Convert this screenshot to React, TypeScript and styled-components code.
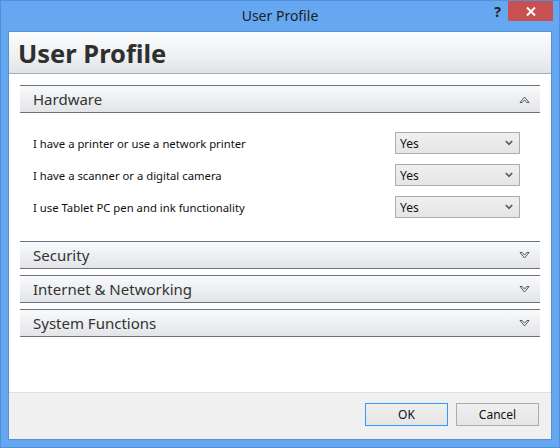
import React from "react"
import styled, { createGlobalStyle } from "styled-components"

const GlobalStyle = createGlobalStyle`
  html, body {
    margin: 0;
    padding: 0;
    width: 560px;
    height: 448px;
    overflow: hidden;
    background: #ffffff;
  }
  * { box-sizing: border-box; }
`

const uiFont = `"Noto Sans", "Open Sans", "DejaVu Sans", sans-serif`

interface SectionProps {
  title: string
  open?: boolean
  children?: React.ReactNode
}

// hollow chevron, as in the accordion headers
const Chevron: React.FunctionComponent<{ up?: boolean }> = ({ up = false }) => (
  <svg width="11" height="9" viewBox="0 0 11 9" style={up ? undefined : { transform: "scaleY(-1)" }}>
    <path
      d="M1 7.5 L5.5 2 L10 7.5 L7.8 7.5 L5.5 4.8 L3.2 7.5 Z"
      fill="#ffffff"
      stroke="#50565e"
      strokeWidth="1"
      strokeLinejoin="round"
    />
  </svg>
)

const Section: React.FunctionComponent<SectionProps> = ({ title, open = false, children }) => (
  <SectionBox>
    <SectionHeader>
      <SectionTitle>{title}</SectionTitle>
      <Chevron up={open} />
    </SectionHeader>
    {open && <SectionBody>{children}</SectionBody>}
  </SectionBox>
)

const SettingRow: React.FunctionComponent<{ label: string; value: string }> = ({ label, value }) => (
  <Row>
    <RowLabel>{label}</RowLabel>
    <Select>
      <span>{value}</span>
      <svg width="8" height="6" viewBox="0 0 8 6">
        <path d="M0.8 1 L4 4.3 L7.2 1" fill="none" stroke="#5a5a5a" strokeWidth="1.7" />
      </svg>
    </Select>
  </Row>
)

const App: React.FunctionComponent = () => {
  const settings = [
    "I have a printer or use a network printer",
    "I have a scanner or a digital camera",
    "I use Tablet PC pen and ink functionality",
  ]

  return (
    <>
      <GlobalStyle />
      <Window>
        <TitleBar>
          <WindowTitle>User Profile</WindowTitle>
          <HelpGlyph>?</HelpGlyph>
          <CloseButton>
            <svg width="10" height="9" viewBox="0 0 10 9">
              <path d="M1 0.5 L9 8.5 M9 0.5 L1 8.5" stroke="#ffffff" strokeWidth="2" />
            </svg>
          </CloseButton>
        </TitleBar>
        <Client>
          <Banner>User Profile</Banner>
          <Content>
            <Section title="Hardware" open>
              {settings.map((s) => (
                <SettingRow key={s} label={s} value="Yes" />
              ))}
            </Section>
            <Section title="Security" />
            <Section title="Internet & Networking" />
            <Section title="System Functions" />
          </Content>
          <Footer>
            <DialogButton primary>OK</DialogButton>
            <DialogButton>Cancel</DialogButton>
          </Footer>
        </Client>
      </Window>
    </>
  )
}

const Window = styled.div`
  width: 560px;
  height: 448px;
  background: #65a7f1;
  border: 1px solid #4f8fdc;
  display: flex;
  flex-direction: column;
  font-family: ${uiFont};
`

const TitleBar = styled.div`
  height: 30px;
  position: relative;
  display: flex;
  align-items: center;
  justify-content: center;
`

const WindowTitle = styled.div`
  font-size: 14px;
  color: #1e1e1e;
  margin-top: -1px;
`

const HelpGlyph = styled.div`
  position: absolute;
  right: 58px;
  top: 1px;
  font-size: 14px;
  font-weight: bold;
  color: #222;
`

const CloseButton = styled.div`
  position: absolute;
  right: 6px;
  top: 0;
  width: 45px;
  height: 20px;
  background: #c75050;
  display: flex;
  align-items: center;
  justify-content: center;
`

const Client = styled.div`
  flex: 1;
  margin: 0 7px 7px 7px;
  background: #ffffff;
  border: 1px solid #5a8fd0;
  display: flex;
  flex-direction: column;
`

const Banner = styled.div`
  height: 42px;
  background: linear-gradient(#fbfcfd, #eef0f2 60%, #e0e3e6);
  border-bottom: 1px solid #a6adb5;
  padding: 2px 0 0 9px;
  font-size: 25.5px;
  font-weight: bold;
  color: #2f2f2f;
  line-height: 38px;
`

const Content = styled.div`
  flex: 1;
  padding: 11px 11px 0 11px;
  display: flex;
  flex-direction: column;
  gap: 6px;
`

const SectionBox = styled.div`
  display: flex;
  flex-direction: column;
`

const SectionHeader = styled.div`
  height: 28px;
  border-top: 1px solid #6a7380;
  border-bottom: 1px solid #6a7380;
  background: linear-gradient(#f9fafb, #eceef0 55%, #e2e4e7);
  display: flex;
  align-items: center;
  justify-content: space-between;
  padding: 0 10px 0 13px;
`

const SectionTitle = styled.span`
  font-size: 15px;
  color: #333333;
`

const SectionBody = styled.div`
  padding: 19px 0 17px 13px;
  display: flex;
  flex-direction: column;
  gap: 10px;
`

const Row = styled.div`
  display: flex;
  align-items: center;
  justify-content: space-between;
  height: 22px;
  padding-right: 20px;
`

const RowLabel = styled.span`
  font-size: 11.3px;
  color: #111111;
`

const Select = styled.div`
  width: 125px;
  height: 22px;
  border: 1px solid #acacac;
  background: linear-gradient(#efefef, #e5e5e5);
  display: flex;
  align-items: center;
  justify-content: space-between;
  padding: 0 6px 0 4px;
  font-size: 12px;
  color: #111111;
`

const Footer = styled.div`
  height: 47px;
  background: #f0f0f0;
  border-top: 1px solid #dfdfdf;
  display: flex;
  justify-content: flex-end;
  gap: 8px;
  padding: 10px 12px 0 0;
`

const DialogButton = styled.div<{ primary?: boolean }>`
  width: 83px;
  height: 23px;
  border: 1px solid ${(p) => (p.primary ? "#3399ff" : "#acacac")};
  background: linear-gradient(#f0f0f0, #e5e5e5);
  display: flex;
  align-items: center;
  justify-content: center;
  font-size: 12px;
  color: #111111;
`

export default App
